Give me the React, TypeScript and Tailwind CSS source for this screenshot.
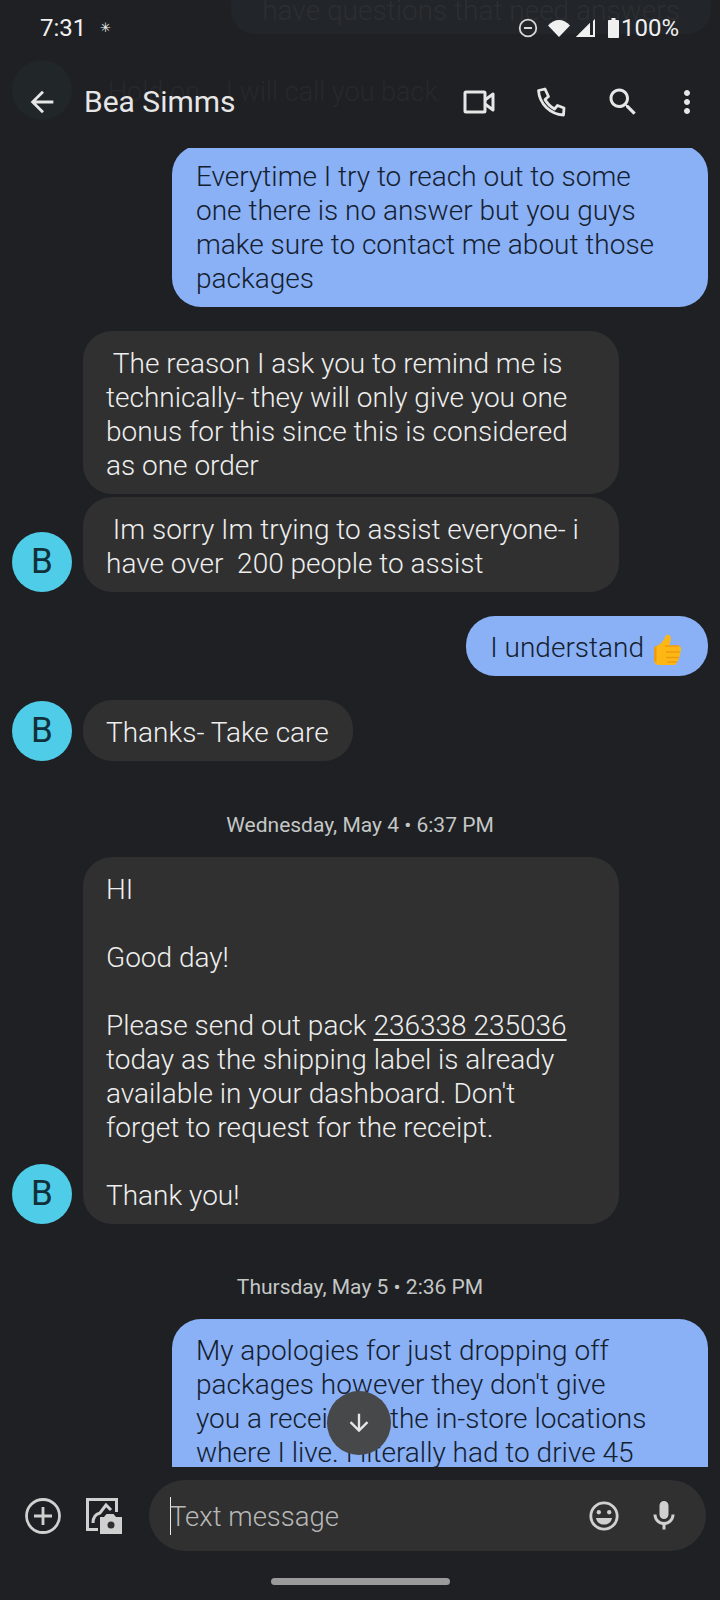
import { ReactNode } from "react";

const font = { fontFamily: "Roboto, sans-serif" };

function Icon({ d, size = 24, className = "" }: { d: string; size?: number; className?: string }) {
  return (
    <svg width={size} height={size} viewBox="0 0 24 24" fill="currentColor" className={className}>
      <path d={d} />
    </svg>
  );
}

function Thumb() {
  return (
    <svg width="30" height="31" viewBox="0 0 30 31" className="ml-[8px] inline-block align-[-8px]">
      <path d="M2 15c0-1.500 1-2.500 2.500-3C9 10.500 12 6 13.500 2c.7-1.600 4-1.800 5 .5 1 2.500-.5 6.500-1.500 9h8c3 0 4.500 2 4 4.500-.3 1.200-.5 2-1 2.600.8 2.400-.3 3.900-1.200 4.600.3 2.400-.8 3.700-1.800 4.200 0 2-1.500 3.600-3.500 3.600H8c-4 0-6-2-6-5z" fill="#fdb714" />
      <path d="M13 12h14M14 18h14M14 23.500h13M15 28h10" stroke="#ef9a0c" strokeWidth="1.300" fill="none" />
      <path d="M2 15c0-1.500 1-2.500 2.500-3v17C3 28.300 2 27 2 25z" fill="#ef9a0c" />
    </svg>
  );
}

function Sent({ children, width, className = "" }: { children: ReactNode; width: string; className?: string }) {
  return (
    <div className={`flex justify-end pr-3 ${className}`}>
      <div className={`${width} rounded-[29px] bg-[#8ab0f6] pl-6 pr-[26px] pt-[15px] pb-[11px] text-[#14202f] whitespace-pre-wrap`}>
        {children}
      </div>
    </div>
  );
}

function Received({ children, width, avatar, className = "" }: { children: ReactNode; width: string; avatar?: boolean; className?: string }) {
  return (
    <div className={`flex items-end ${className}`}>
      <div className="ml-3 mr-[11px] w-[60px] shrink-0">
        {avatar && (
          <div className="flex h-[60px] w-[60px] items-center justify-center rounded-full bg-[#4fcde8] text-[35px] font-normal text-[#12303a]">
            B
          </div>
        )}
      </div>
      <div className={`${width} rounded-[29px] bg-[#303030] pl-[23px] pr-6 pt-4 pb-[11px] text-[#eeeeee] whitespace-pre-wrap`}>
        {children}
      </div>
    </div>
  );
}

function DateLine({ children, className = "" }: { children: ReactNode; className?: string }) {
  return <p className={`text-center text-[21px] font-normal leading-[26px] text-[#c4c7c5] ${className}`}>{children}</p>;
}

export default function App() {
  return (
    <div className="relative flex h-[1600px] w-[720px] flex-col overflow-hidden bg-[#1e2024] text-[28px] font-light leading-[34px]" style={font}>
      {/* scrolled content showing faintly behind the header */}
      <div className="absolute right-[9px] top-[-20px] flex h-[54px] w-[480px] items-end justify-center rounded-[24px] bg-[#222529] pb-[6px] text-[#2c2f33]">
        have questions that need answers
      </div>
      <div className="absolute left-[12px] top-[60px] h-[60px] w-[60px] rounded-full bg-[#212629]" />
      <div className="absolute left-[108px] top-[75px] text-[27px] text-[#26292c]">Hold on... I will call you back</div>

      <div className="relative flex h-[54px] shrink-0 items-center pl-10 pr-[41px] pt-[2px] text-[#f0f0f0]">
        <span className="text-[24px] font-normal">7:31</span>
        <span className="ml-[14px] text-[13px]">✳</span>
        <div className="ml-auto flex items-center">
          <svg width="20" height="20" viewBox="0 0 20 20" fill="none" stroke="#d8d8d8" strokeWidth="1.800">
            <circle cx="10" cy="10" r="8.300" />
            <path d="M6 10h8" strokeWidth="2" />
          </svg>
          <svg width="24" height="19" viewBox="0 0 24 19" fill="currentColor" className="ml-[9px]">
            <path d="M12 18 1 6.500C4 3 8 1 12 1s8 2 11 5.500z" />
          </svg>
          <svg width="20" height="18" viewBox="0 0 20 18" fill="currentColor" className="ml-[5px]">
            <path d="M19 0v18H0L14 4v12h3V2z" />
            <path d="M14 4 0 18h14z" />
          </svg>
          <svg width="11" height="20" viewBox="0 0 11 20" fill="currentColor" className="ml-[12px]">
            <path d="M3.500 0h4v2H10c.6 0 1 .4 1 1v16c0 .6-.4 1-1 1H1c-.6 0-1-.4-1-1V3c0-.6.4-1 1-1h2.500z" />
          </svg>
          <span className="ml-[2px] text-[24px] font-normal leading-none">100%</span>
        </div>
      </div>

      <div className="relative flex h-[94px] shrink-0 items-center pt-[2px] text-[#e6e6e6]">
        <Icon size={34} className="ml-[25px]" d="M20 11H7.830l5.590-5.590L12 4l-8 8 8 8 1.410-1.410L7.830 13H20v-2z" />
        <span className="ml-[25px] text-[30px] font-normal">Bea Simms</span>
        <div className="ml-auto flex items-center">
          <svg width="32" height="24" viewBox="0 0 32 24" fill="none" stroke="currentColor" strokeWidth="3" strokeLinejoin="round">
            <rect x="2" y="2" width="20" height="20" rx="1" />
            <path d="M22 10l8-6v16l-8-6" />
          </svg>
          <svg width="30" height="30" viewBox="0 0 30 30" fill="none" stroke="currentColor" strokeWidth="2.800" strokeLinejoin="round" className="ml-[41px]">
            <path d="M2.500 3.500 9 2l3.500 7.500-3.500 3c2.500 4.500 5 7 9.500 9.500l3-3.500 6.500 2.500-.5 7C14 27 3.500 17 2.500 3.500z" />
          </svg>
          <Icon size={36} className="ml-[39px]" d="M15.500 14h-.79l-.28-.27C15.410 12.590 16 11.110 16 9.500 16 5.910 13.090 3 9.500 3S3 5.910 3 9.500 5.910 16 9.500 16c1.610 0 3.090-.59 4.230-1.570l.27.28v.79l5 4.990L20.490 19l-4.990-5zm-6 0C7.010 14 5 11.990 5 9.500S7.010 5 9.500 5 14 7.010 14 9.500 11.990 14 9.500 14z" />
          <Icon size={36} className="ml-[28px] mr-[15px]" d="M12 8c1.100 0 2-.9 2-2s-.9-2-2-2-2 .9-2 2 .9 2 2 2zm0 2c-1.100 0-2 .9-2 2s.9 2 2 2 2-.9 2-2-.9-2-2-2zm0 6c-1.100 0-2 .9-2 2s.9 2 2 2 2-.9 2-2-.9-2-2-2z" />
        </div>
      </div>

      <div className="relative flex-1 overflow-hidden">
        <Sent width="w-[536px]" className="mt-[-3px]">{"Everytime I try to reach out to some\none there is no answer but you guys\nmake sure to contact me about those\npackages"}</Sent>
        <Received width="w-[536px]" className="mt-6">{" The reason I ask you to remind me is\ntechnically- they will only give you one\nbonus for this since this is considered\nas one order"}</Received>
        <Received width="w-[536px]" avatar className="mt-[3px]">{" Im sorry Im trying to assist everyone- i\nhave over  200 people to assist"}</Received>
        <Sent width="w-fit" className="mt-6">
          I understand<Thumb />
        </Sent>
        <Received width="w-fit" avatar className="mt-6">Thanks- Take care</Received>
        <DateLine className="mt-[51px]">Wednesday, May 4 • 6:37 PM</DateLine>
        <Received width="w-[536px]" avatar className="mt-[19px]">{"HI\n\nGood day!\n\nPlease send out pack "}<span className="underline underline-offset-4">236338 235036</span>{"\ntoday as the shipping label is already\navailable in your dashboard. Don't\nforget to request for the receipt.\n\nThank you!"}</Received>
        <DateLine className="mt-[50px]">Thursday, May 5 • 2:36 PM</DateLine>
        <Sent width="w-[536px]" className="mt-[19px]">{"My apologies for just dropping off\npackages however they don't give\nyou a receipt at the in-store locations\nwhere I live. I literally had to drive 45\nminutes to get to one"}</Sent>
        <div className="absolute bottom-[12px] left-[327px] flex h-[64px] w-[64px] items-center justify-center rounded-full bg-[#47484a] text-[#e6e6e6]">
          <Icon size={28} d="M20 12l-1.410-1.410L13 16.170V4h-2v12.170l-5.580-5.590L4 12l8 8 8-8z" />
        </div>
      </div>

      <div className="flex h-[133px] shrink-0 flex-col">
        <div className="mt-[13px] flex items-center pr-[14px]">
          <svg width="36" height="36" viewBox="0 0 36 36" fill="none" stroke="#d0d0d0" strokeWidth="2.800" className="ml-[25px]">
            <circle cx="18" cy="18" r="16.500" />
            <path d="M18 9v18M9 18h18" />
          </svg>
          <svg width="36" height="36" viewBox="0 0 36 36" fill="none" stroke="#d0d0d0" strokeWidth="3" className="ml-[25px]">
            <path d="M12 31.500H1.500v-30h29V14" />
            <path d="M7 25c0-6 3-9 7-10l6-8 5 5" />
            <path d="M14 19h4l2.500-3h7l2.500 3h6v17H14z" fill="#d0d0d0" stroke="none" />
            <circle cx="25" cy="27" r="3.500" fill="#303030" stroke="none" />
          </svg>
          <div className="ml-[27px] flex h-[71px] flex-1 items-center rounded-[36px] bg-[#303030] pl-[21px] pr-[24px] text-[#b8b8b8]">
            <div className="mr-[-1px] h-[38px] w-[1px] bg-[#e8e8e8]" />
            <span className="mt-[3px] text-[27.500px]">Text message</span>
            <svg width="32" height="34" viewBox="0 0 34 34" className="ml-auto" fill="none" stroke="#d0d0d0" strokeWidth="3">
              <circle cx="17" cy="17" r="14" />
              <circle cx="11.500" cy="13" r="2.300" fill="#d0d0d0" stroke="none" />
              <circle cx="22.500" cy="13" r="2.300" fill="#d0d0d0" stroke="none" />
              <path d="M8.500 19h17c-.7 4.500-4.200 7-8.500 7s-7.800-2.500-8.500-7z" fill="#d0d0d0" stroke="none" />
            </svg>
            <Icon size={36} className="ml-[26px] text-[#d0d0d0]" d="M12 14c1.660 0 3-1.340 3-3V5c0-1.660-1.340-3-3-3S9 3.340 9 5v6c0 1.660 1.340 3 3 3zM17 11c0 2.760-2.240 5-5 5s-5-2.240-5-5H5c0 3.530 2.610 6.430 6 6.920V21h2v-3.080c3.390-.49 6-3.390 6-6.920h-2z" />
          </div>
        </div>
        <div className="mx-auto mt-[27px] h-[7px] w-[179px] rounded-full bg-[#9a9a9a]" />
      </div>
    </div>
  );
}
